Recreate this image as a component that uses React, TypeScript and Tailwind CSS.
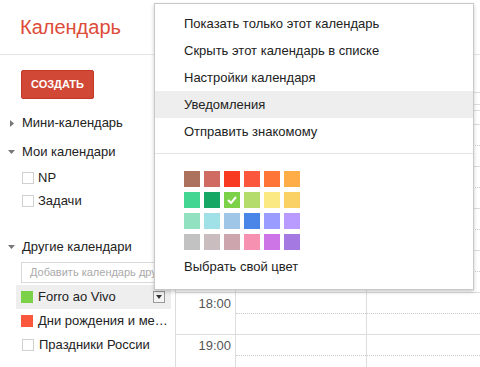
import React from "react";

const palette = [
  ["#ac725e", "#d06b64", "#f83a22", "#fa573c", "#ff7537", "#ffad46"],
  ["#42d692", "#16a765", "#7bd148", "#b3dc6c", "#fbe983", "#fad165"],
  ["#92e1c0", "#9fe1e7", "#9fc6e7", "#4986e7", "#9a9cff", "#b99aff"],
  ["#c2c2c2", "#cabdbf", "#cca6ac", "#f691b2", "#cd74e6", "#a47ae2"],
];

const menuItems = [
  "Показать только этот календарь",
  "Скрыть этот календарь в списке",
  "Настройки календаря",
  "Уведомления",
  "Отправить знакомому",
];

const hours = ["14:00", "15:00", "16:00", "17:00", "18:00", "19:00"];

function Caret({ open }: { open: boolean }) {
  return (
    <span className="w-[22px] flex justify-center pl-[1px]">
      {open ? (
        <svg width="7" height="4" viewBox="0 0 7 4">
          <path d="M0 0h7L3.5 4z" fill="#777" />
        </svg>
      ) : (
        <svg width="4" height="7" viewBox="0 0 4 7">
          <path d="M0 0v7l4-3.5z" fill="#777" />
        </svg>
      )}
    </span>
  );
}

function CalRow({ label, color, active }: { label: string; color?: string; active?: boolean }) {
  return (
    <div className={"ml-4 w-[155px] h-[24px] pl-[5px] pr-[6px] flex items-center " + (active ? "bg-[#eeeeee]" : "")}>
      {color ? (
        <span className="w-[12px] h-[12px] shrink-0" style={{ background: color }} />
      ) : (
        <span className="w-[12px] h-[12px] shrink-0 border border-[#d0d0d0] bg-white ml-[1px]" />
      )}
      <span className="ml-[5px] text-[13px] text-[#222] whitespace-nowrap flex-1">{label}</span>
      {active && (
        <span className="w-[12px] h-[12px] border border-[#999] bg-[#f4f4f4] flex items-center justify-center shrink-0">
          <svg width="6" height="4" viewBox="0 0 6 4">
            <path d="M0 0h6L3 4z" fill="#333" />
          </svg>
        </span>
      )}
    </div>
  );
}

export default function App() {
  return (
    <div className="relative w-[480px] h-[367px] overflow-hidden bg-white font-['Liberation_Sans',Arial,sans-serif] text-[#222]">
      <div className="h-[55px] border-b border-[#e5e5e5] flex items-center pl-[20px]">
        <span className="text-[20px] text-[#dd4b39] leading-none">Календарь</span>
      </div>

      <div className="flex">
        {/* sidebar */}
        <div className="w-[175px] shrink-0">
          <div className="ml-[21px] mt-[15px] w-[73px] h-[29px] rounded-[2px] bg-[#d14836] border border-[#c53727] flex items-center justify-center text-white text-[11px] font-bold">
            СОЗДАТЬ
          </div>
          <div className="mt-[12px] h-[24px] flex items-center text-[13px]">
            <Caret open={false} />
            Мини-календарь
          </div>
          <div className="mt-[5px] h-[24px] flex items-center text-[13px]">
            <Caret open />
            Мои календари
          </div>
          <div className="mt-[2px] h-[23px] flex items-center pl-[22px]">
            <span className="w-[12px] h-[12px] border border-[#d0d0d0]" />
            <span className="ml-[4px] text-[13px]">NP</span>
          </div>
          <div className="h-[23px] flex items-center pl-[22px]">
            <span className="w-[12px] h-[12px] border border-[#d0d0d0]" />
            <span className="ml-[4px] text-[13px]">Задачи</span>
          </div>
          <div className="mt-[23px] h-[24px] flex items-center text-[13px]">
            <Caret open />
            Другие календари
          </div>
          <div className="mt-[3px] ml-[21px] w-[150px] h-[21px] border border-[#d9d9d9] flex items-center pl-[8px] text-[11px] text-[#aaa] whitespace-nowrap overflow-hidden">
            Добавить календарь друга
          </div>
          <div className="mt-[2px]">
            <CalRow label="Forro ao Vivo" color="#7bd148" active />
            <CalRow label="Дни рождения и ме…" color="#fa573c" />
            <CalRow label="Праздники России" />
          </div>
        </div>

        {/* main grid */}
        <div className="flex-1 border-l border-[#dddddd]">
          <div className="h-[38px] border-b border-[#dddddd]" />
          <div className="h-[12px] border-b border-[#dddddd]" />
          <div className="h-[6px] border-b border-[#dddddd]" />
          <div className="h-[14px] border-b border-[#dddddd]" />
          {hours.map((h) => (
            <div key={h} className="h-[42px] border-b border-[#dddddd] flex">
              <div className="w-[60px] border-r border-[#dddddd] text-right pr-[4px] pt-[1px] text-[13px] text-[#555]">{h}</div>
              <div className="w-[131px] border-r border-[#dddddd]">
                <div className="h-[21px] border-b border-dotted border-[#cccccc]" />
              </div>
              <div className="flex-1">
                <div className="h-[21px] border-b border-dotted border-[#cccccc]" />
              </div>
            </div>
          ))}
        </div>
      </div>

      {/* dropdown menu */}
      <div className="absolute left-[154px] top-[3px] w-[320px] h-[287px] bg-white border border-[#c8c8c8] shadow-[0_2px_4px_rgba(0,0,0,0.2)] pt-[6px]">
        {menuItems.map((m) => (
          <div
            key={m}
            className={"h-[27px] flex items-center px-[29px] text-[13px] text-[#222] " + (m === "Уведомления" ? "bg-[#eeeeee]" : "")}
          >
            {m}
          </div>
        ))}
        <div className="mt-[8px] border-t border-[#e5e5e5]" />
        <div className="mt-[17px] ml-[29px] flex flex-col gap-[5px]">
          {palette.map((row, i) => (
            <div key={i} className="flex gap-[4px]">
              {row.map((c) => (
                <div key={c} className="w-[16px] h-[16px] flex items-center justify-center" style={{ background: c }}>
                  {c === "#7bd148" && (
                    <svg width="10" height="8" viewBox="0 0 10 8">
                      <path d="M1 4l3 3 5-6" stroke="#fff" strokeWidth="2" fill="none" />
                    </svg>
                  )}
                </div>
              ))}
            </div>
          ))}
        </div>
        <div className="mt-[7px] h-[20px] flex items-center px-[29px] text-[13px] text-[#222]">Выбрать свой цвет</div>
      </div>
    </div>
  );
}
